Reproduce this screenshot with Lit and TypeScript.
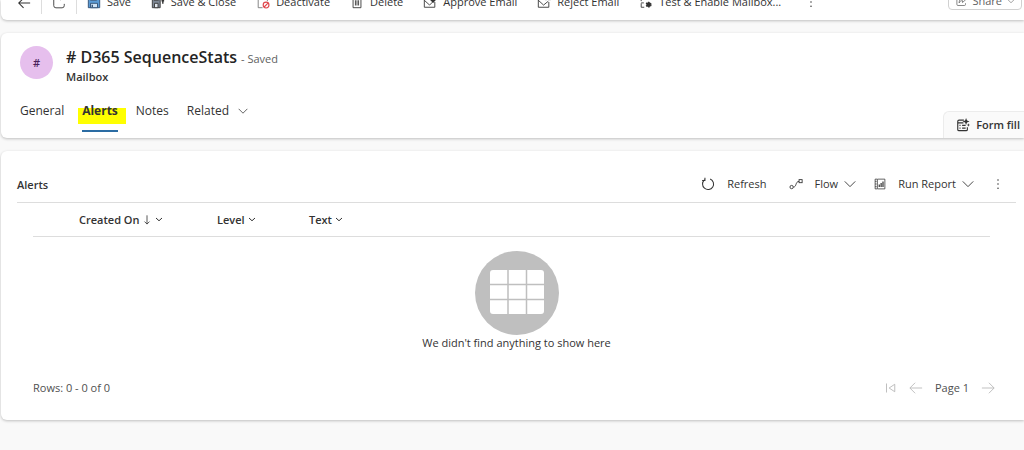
import { LitElement, html, css, svg } from "lit";
import { customElement, property } from "lit/decorators.js";

const icons: Record<string, unknown> = {
  back: svg`<path d="M15 8H2M7.500 2.500 2 8l5.500 5.500" stroke-width="1.200"/>`,
  popout: svg`<path d="M7 1.500H4A2 2 0 0 0 2 3.500V11a2.500 2.500 0 0 0 2.500 2.500h7A2.500 2.500 0 0 0 14 11V9M10 .5h4.500V4M14.500.5 10 4.500"/>`,
  save: svg`<path d="M1.500 1.500h11l2 2v11h-13z" fill="#5b9bd5" stroke="#2b4a6f"/><path d="M4 1.500h7V6H4z" fill="#fff" stroke="#2b4a6f"/><path d="M4 9.500h8v5H4z" fill="#cfe3f5" stroke="#2b4a6f"/><path d="M6 11v3" stroke="#2b4a6f" stroke-width="1.500"/>`,
  saveClose: svg`<path d="M1.500 2.500h9v12h-9z" fill="#7d8794" stroke="#333"/><path d="M3.500 2.500h5V6h-5z" fill="#fff" stroke="#333"/><path d="M4 9.500h4v5H4z" fill="#dfe5ec" stroke="#333"/><path d="M15 6.500h-3M13.500 5v5" stroke-width="1.600"/>`,
  deactivate: svg`<path d="M7.500 14.500H2.500v-13h7l3.500 3.500v2" stroke="#777"/><circle cx="11.500" cy="11.500" r="3.300" stroke="#e0474c" stroke-width="1.300"/><path d="m9.300 13.700 4.400-4.400" stroke="#e0474c" stroke-width="1.300"/>`,
  trash: svg`<path d="M2 3.500h12M6 3.500v-2h4v2M3.500 3.500v11h9v-11M6.200 6v6M8 6v6M9.800 6v6"/>`,
  approve: svg`<path d="M13.500 8v6H1.500V4.500H8M1.500 6l6 5.500L11 8"/><path d="m9 5 2.500 2.500L15.500 3" stroke-width="2.400"/>`,
  reject: svg`<path d="M13.500 8v6H1.500V4.500H8M1.500 6l6 5.500L13 7M10.500 2l4 4M14.500 2l-4 4"/>`,
  mailbox: svg`<path d="M6 14H2.500V9.500M2.500 7V3.500H6M8 3.500h4M2.500 9h3"/><circle cx="11" cy="11" r="2.600" fill="#333" stroke-width="1.600" stroke-dasharray="1.600 1"/>`,
  more: svg`<g fill="currentColor" stroke="none"><circle cx="8" cy="2.500" r="1"/><circle cx="8" cy="8" r="1"/><circle cx="8" cy="13.500" r="1"/></g>`,
  share: svg`<path d="M6.500 2.500H4A1.500 1.500 0 0 0 2.500 4v8.500A1.500 1.500 0 0 0 4 14h8.500a1.500 1.500 0 0 0 1.500-1.500V11M10 1.500 14.500 6 10 10V7.500C8 7.500 6.500 8.500 5.500 10.500 5.500 7 7.500 4.500 10 4.200z"/>`,
  chevron: svg`<path d="m1 4.500 7 7 7-7" stroke-width="1.200"/>`,
  chevronBold: svg`<path d="m2 4 6 5.500L14 4" stroke-width="2"/>`,
  refresh: svg`<path d="M4 3.200A6.300 6.300 0 1 0 10.500 2.200M4.500 .8v3.200H1.300" stroke-width="1.200"/>`,
  flow: svg`<circle cx="3" cy="11.500" r="1.900"/><rect x="11.500" y="3" width="3.500" height="3.500"/><path d="M5 11.500c4 0 2-6.500 6.500-6.500"/>`,
  report: svg`<path d="M4 1.500H1.500v13H4M1.500 4.500h2M1.500 8h2M1.500 11.500h2M4.500 1.500h10v13h-10z"/><path d="M7 12V8.500M9.500 12V6.500M12 12V4.500" stroke-width="1.600"/>`,
  form: svg`<path d="M9 2.500H3.500A1.500 1.500 0 0 0 2 4v9a1.500 1.500 0 0 0 1.500 1.500h8A1.500 1.500 0 0 0 13 13v-2.500M2 5.500h6.500M7 8.500h4M7 11.500h4" stroke-width="1.300"/><path d="M4 8.500h1.200M4 11.500h1.200" stroke-width="1.500"/><path d="m11.500 0 1.100 2.900 2.900 1.100-2.900 1.100-1.100 2.900-1.100-2.900L7.500 4l2.900-1.100zM14.200 6l.5 1.500 1.300.5-1.300.5-.5 1.500-.5-1.500-1.300-.5 1.300-.5z" fill="currentColor" stroke="none"/>`,
  down: svg`<path d="M8 .5v14M4 10.500l4 4 4-4" stroke-width="1.300"/>`,
  first: svg`<path d="M2 2v12M13 3v10L5.500 8z" stroke-width="1.200"/>`,
  prev: svg`<path d="M15 8H1M7 2 1 8l6 6"/>`,
  next: svg`<path d="M1 8h14M9 2l6 6-6 6"/>`,
};

@customElement("ui-icon")
class UiIcon extends LitElement {
  @property() name = "";

  static styles = css`
    :host {
      display: block;
      flex: none;
      width: 14px;
      height: 14px;
    }
    .glyph {
      display: block;
      width: 100%;
      height: 100%;
      fill: none;
      stroke: currentColor;
    }
  `;

  render() {
    return html`<svg class="glyph" viewBox="0 0 16 16" aria-hidden="true">${icons[this.name]}</svg>`;
  }
}

@customElement("app-root")
class AppRoot extends LitElement {
  static styles = css`
    :host {
      display: flex;
      flex-direction: column;
      gap: 13px;
      box-sizing: border-box;
      min-height: 100vh;
      padding-left: 1px;
      background: #f9f9f9;
      color: #333;
      font: 11px/16px "Open Sans", "Noto Sans", sans-serif;
      overflow: hidden;
    }
    button {
      display: flex;
      align-items: center;
      gap: 6px;
      margin: 0;
      padding: 0;
      border: 0;
      background: none;
      color: inherit;
      font: inherit;
      white-space: nowrap;
    }
    .card {
      background: #fff;
      border-radius: 6px 0 0 6px;
      box-shadow: 0 1px 3px rgba(0, 0, 0, 0.24);
    }
    .commands {
      display: flex;
      align-items: flex-end;
      height: 20px;
      box-sizing: border-box;
      padding: 0 2px 10px 16px;
      border-radius: 0 0 0 6px;
    }
    .commands .list {
      display: flex;
      align-items: center;
      gap: 20px;
      flex: 1;
    }
    .commands .overflow {
      padding-left: 4px;
    }
    .commands .rule {
      width: 1px;
      height: 24px;
      margin: 0 10px -4px;
      background: #ddd;
    }
    .share {
      padding: 4px 6px 0;
      border: 1px solid #d1d1d1;
      border-radius: 4px;
      color: #616161;
      gap: 5px;
    }
    .small {
      width: 10px;
      height: 10px;
    }
    .record {
      display: flex;
      flex-direction: column;
    }
    .identity {
      display: flex;
      align-items: flex-start;
      gap: 13px;
      padding: 12px 19px 0;
    }
    .avatar {
      display: grid;
      place-items: center;
      width: 33px;
      height: 33px;
      margin-top: 1px;
      border-radius: 50%;
      background: #e6bfed;
      color: #4b1f5c;
      font-weight: 600;
    }
    .title {
      display: flex;
      align-items: baseline;
      gap: 4px;
      color: #616161;
    }
    h1 {
      margin: 0;
      color: #242424;
      font-size: 16px;
      line-height: 24px;
      font-weight: 600;
    }
    .entity {
      font-weight: 600;
    }
    .tabrow {
      display: flex;
      justify-content: space-between;
      margin-top: 10px;
    }
    .tabs {
      display: flex;
      align-items: flex-start;
      gap: 18px;
      height: 43px;
      padding-left: 19px;
      font-size: 12px;
    }
    .tab {
      position: relative;
      box-sizing: border-box;
      height: 37px;
      padding-bottom: 5px;
      gap: 9px;
    }
    .tab.active {
      padding-bottom: 3px;
      border-bottom: 2px solid #2b6ca3;
      font-weight: 700;
      isolation: isolate;
    }
    .tab.active::before {
      content: "";
      position: absolute;
      z-index: -1;
      inset: 13px -8px 6px -4px;
      background: #ffff00;
    }
    .formfill {
      align-self: flex-end;
      height: 27px;
      padding: 0 4px 0 12px;
      border: 1px solid #ececec;
      border-width: 1px 0 0 1px;
      border-radius: 6px 0 0 0;
      background: #fafafa;
      font-weight: 600;
    }
    .grid {
      padding: 12px 8px 24px 16px;
    }
    .gridhead {
      display: flex;
      align-items: center;
      justify-content: space-between;
      height: 39px;
      border-bottom: 1px solid #ddd;
    }
    h2 {
      margin: 0;
      padding-top: 4px;
      font-size: 11px;
      line-height: 16px;
      font-weight: 600;
    }
    .tools {
      display: flex;
      align-items: center;
      gap: 18px;
      padding: 2px 12px 0 0;
    }
    .tools button {
      gap: 12px;
    }
    .tools .plain {
      padding-right: 4px;
    }
    .tools .drop {
      display: flex;
      align-items: center;
      gap: 6px;
    }
    .mid {
      width: 12px;
      height: 12px;
    }
    .sheet {
      padding: 0 26px 0 16px;
    }
    table {
      width: 100%;
      border-collapse: collapse;
      table-layout: fixed;
    }
    th,
    td {
      height: 33px;
      padding: 0;
      border-bottom: 1px solid #ddd;
      font-weight: 600;
      text-align: left;
    }
    th button {
      gap: 3px;
    }
    .c0 {
      width: 46px;
    }
    .c1 {
      width: 138px;
    }
    .c2 {
      width: 92px;
    }
    .tiny {
      width: 8px;
      height: 8px;
    }
    .empty {
      display: flex;
      flex-direction: column;
      align-items: center;
      padding-top: 14px;
    }
    .empty svg {
      width: 84px;
      height: 84px;
    }
    .foot {
      display: flex;
      align-items: center;
      justify-content: space-between;
      margin-top: 29px;
      padding: 0 21px 0 16px;
      color: #505050;
    }
    .pager {
      display: flex;
      align-items: center;
      gap: 12px;
    }
    .pager button {
      color: #b8b8b8;
    }
  `;

  private commands = [
    ["save", "Save"],
    ["saveClose", "Save & Close"],
    ["deactivate", "Deactivate"],
    ["trash", "Delete"],
    ["approve", "Approve Email"],
    ["reject", "Reject Email"],
    ["mailbox", "Test & Enable Mailbox..."],
  ];

  render() {
    return html`
      <header class="card commands">
        <button aria-label="Back"><ui-icon name="back"></ui-icon></button>
        <span class="rule"></span>
        <button aria-label="Open in new window"><ui-icon name="popout"></ui-icon></button>
        <span class="rule"></span>
        <div class="list">
          ${this.commands.map(
            ([icon, label]) => html`<button><ui-icon name=${icon}></ui-icon>${label}</button>`
          )}
          <button class="overflow" aria-label="More commands"><ui-icon class="mid" name="more"></ui-icon></button>
        </div>
        <button class="share">
          <ui-icon class="mid" name="share"></ui-icon>Share<ui-icon class="tiny" name="chevron"></ui-icon>
        </button>
      </header>

      <section class="card record">
        <div class="identity">
          <span class="avatar">#</span>
          <div>
            <div class="title"><h1># D365 SequenceStats</h1><span>- Saved</span></div>
            <div class="entity">Mailbox</div>
          </div>
        </div>
        <div class="tabrow">
          <div class="tabs" role="tablist">
            <button class="tab" role="tab" aria-selected="false">General</button>
            <button class="tab active" role="tab" aria-selected="true">Alerts</button>
            <button class="tab" role="tab" aria-selected="false">Notes</button>
            <button class="tab" role="tab" aria-selected="false">
              Related<ui-icon class="small" name="chevron"></ui-icon>
            </button>
          </div>
          <button class="formfill"><ui-icon name="form"></ui-icon>Form fill</button>
        </div>
      </section>

      <main class="card grid">
        <div class="gridhead">
          <h2>Alerts</h2>
          <div class="tools">
            <button class="plain"><ui-icon name="refresh"></ui-icon>Refresh</button>
            <button>
              <ui-icon name="flow"></ui-icon>
              <span class="drop">Flow<ui-icon class="mid" name="chevron"></ui-icon></span>
            </button>
            <button>
              <ui-icon class="mid" name="report"></ui-icon>
              <span class="drop">Run Report<ui-icon class="mid" name="chevron"></ui-icon></span>
            </button>
            <button aria-label="More actions"><ui-icon class="mid" name="more"></ui-icon></button>
          </div>
        </div>
        <div class="sheet">
          <table>
            <thead>
              <tr>
                <td class="c0"></td>
                <th class="c1" scope="col">
                  <button>Created On<ui-icon class="small" name="down"></ui-icon><ui-icon class="tiny" name="chevronBold"></ui-icon></button>
                </th>
                <th class="c2" scope="col">
                  <button>Level<ui-icon class="tiny" name="chevronBold"></ui-icon></button>
                </th>
                <th scope="col">
                  <button>Text<ui-icon class="tiny" name="chevronBold"></ui-icon></button>
                </th>
              </tr>
            </thead>
          </table>
        </div>
        <div class="empty">
          <svg viewBox="0 0 84 84" aria-hidden="true">
            <circle cx="42" cy="42" r="42" fill="#bfbfbf" />
            <rect x="15" y="19" width="54" height="44" rx="3" fill="#fff" />
            <path d="M33 19v44M51.500 19v44M15 33.500h54M15 48.500h54" stroke="#bfbfbf" stroke-width="1.500" />
          </svg>
          <span>We didn't find anything to show here</span>
        </div>
        <div class="foot">
          <span>Rows: 0 - 0 of 0</span>
          <div class="pager">
            <button aria-label="First page" disabled><ui-icon class="mid" name="first"></ui-icon></button>
            <button aria-label="Previous page" disabled><ui-icon name="prev"></ui-icon></button>
            <span>Page 1</span>
            <button aria-label="Next page" disabled><ui-icon name="next"></ui-icon></button>
          </div>
        </div>
      </main>
    `;
  }
}
